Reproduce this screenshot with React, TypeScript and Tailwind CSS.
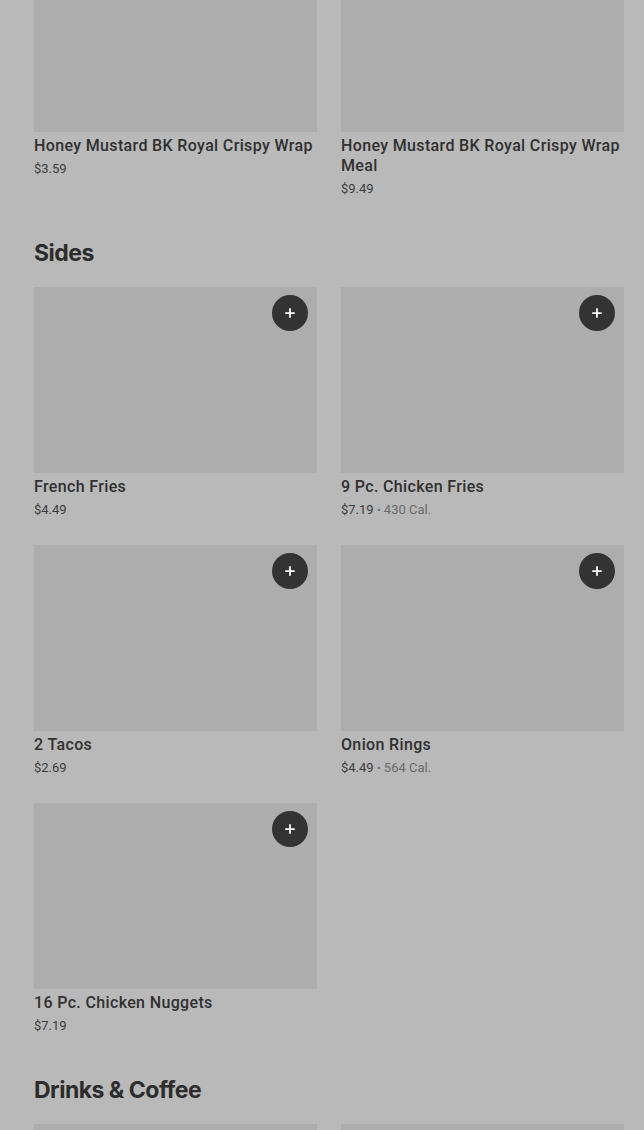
import { Plus } from "lucide-react";

type Item = { name: string; price: string; cal?: string; add?: boolean };

const wraps: Item[] = [
  { name: "Honey Mustard BK Royal Crispy Wrap", price: "$3.59" },
  { name: "Honey Mustard BK Royal Crispy Wrap Meal", price: "$9.49" },
];

const sides: Item[] = [
  { name: "French Fries", price: "$4.49", add: true },
  { name: "9 Pc. Chicken Fries", price: "$7.19", cal: "430 Cal.", add: true },
  { name: "2 Tacos", price: "$2.69", add: true },
  { name: "Onion Rings", price: "$4.49", cal: "564 Cal.", add: true },
  { name: "16 Pc. Chicken Nuggets", price: "$7.19", add: true },
];

const drinks: Item[] = [
  { name: "Coca-Cola", price: "$2.49", add: true },
  { name: "Iced Coffee", price: "$2.99", add: true },
];

function Card({ item, first }: { item: Item; first?: boolean }) {
  return (
    <div>
      <div
        className={`relative h-[186px] bg-[#adadad] ${first ? "-mt-[54px]" : ""}`}
      >
        {item.add && (
          <button className="absolute right-[9px] top-[8px] flex h-9 w-9 items-center justify-center rounded-full bg-[#333333] text-white">
            <Plus size={14} strokeWidth={3} />
          </button>
        )}
      </div>
      <p className="mt-[4px] font-['Roboto',sans-serif] text-[16px] leading-[20px] font-medium tracking-[0.35px] text-[#303030]">
        {item.name}
      </p>
      <p className="mt-[4px] font-['Roboto',sans-serif] text-[13px] leading-[18px] text-[#3c3c3c]">
        {item.price}
        {item.cal && (
          <span className="text-[#6a6a6a]">
            {" "}
            <span className="text-[11px]">•</span> {item.cal}
          </span>
        )}
      </p>
    </div>
  );
}

function Section({ title, items }: { title: string; items: Item[] }) {
  return (
    <section className="pt-[41px]">
      <h2 className="mb-[20px] text-[23px] leading-[28px] font-bold tracking-[-0.5px] text-[#2c2c2c]">
        {title}
      </h2>
      <div className="grid grid-cols-2 gap-x-6 gap-y-[25px]">
        {items.map((it) => (
          <Card key={it.name} item={it} />
        ))}
      </div>
    </section>
  );
}

export default function App() {
  return (
    <div className="min-h-screen bg-[#b9b9b9] pl-[34px] pr-[20px] font-['Inter',sans-serif]">
      <div className="grid grid-cols-2 gap-x-6">
        {wraps.map((it) => (
          <Card key={it.name} item={it} first />
        ))}
      </div>
      <Section title="Sides" items={sides} />
      <Section title="Drinks & Coffee" items={drinks} />
    </div>
  );
}
